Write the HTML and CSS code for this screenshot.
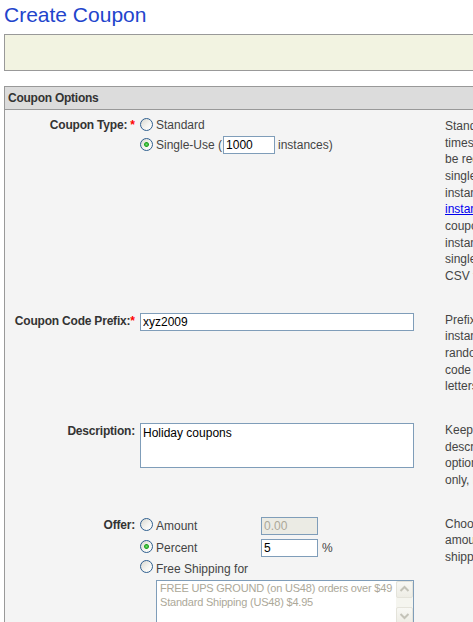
FILE: index.html
```html
<!DOCTYPE html>
<html>
<head>
<meta charset="utf-8">
<title>Create Coupon</title>
<link rel="stylesheet" href="styles.css">
</head>
<body>
<div class="page">
  <h1 class="title">Create Coupon</h1>
  <div class="notice"></div>
  <div class="panel">
    <div class="panel-head">Coupon Options</div>
    <div class="panel-body">

      <div class="row row-first">
        <div class="label">Coupon Type: <span class="req">*</span></div>
        <div class="field">
          <div class="opt">
            <input type="radio" name="ctype" class="radio">
            <span class="opt-text">Standard</span>
          </div>
          <div class="opt opt-gap">
            <input type="radio" name="ctype" class="radio" checked>
            <span class="opt-text">Single-Use (</span>
            <input type="text" class="text qty" value="1000">
            <span class="opt-text after">instances)</span>
          </div>
        </div>
        <div class="desc">
          Standard coupons may be used many<br>
          times by any customer, and can always<br>
          be redeemed again. A<br>
          single-use coupon generates unique<br>
          instances, each usable once. Use<br>
          <a href="#" class="link">instance management</a> to see each<br>
          coupon's status, add more<br>
          instances or download the<br>
          single-use codes as a<br>
          CSV file.
        </div>
      </div>

      <div class="row">
        <div class="label">Coupon Code Prefix:<span class="req">*</span></div>
        <div class="field">
          <input type="text" class="text wide" value="xyz2009">
        </div>
        <div class="desc">
          Prefix used for every generated<br>
          instance. It is followed by a<br>
          random string to make each<br>
          code unique. Use numbers and<br>
          letters only.
        </div>
      </div>

      <div class="row">
        <div class="label">Description:</div>
        <div class="field">
          <textarea class="area">Holiday coupons</textarea>
        </div>
        <div class="desc">
          Keep this short; the<br>
          description is shown in the<br>
          options list for admin use<br>
          only, not to customers.
        </div>
      </div>

      <div class="row">
        <div class="label">Offer:</div>
        <div class="field">
          <div class="offer-line">
            <div class="opt">
              <input type="radio" name="offer" class="radio">
              <span class="opt-text">Amount</span>
            </div>
            <input type="text" class="text amt" value="0.00" disabled>
          </div>
          <div class="offer-line offer-gap">
            <div class="opt">
              <input type="radio" name="offer" class="radio" checked>
              <span class="opt-text">Percent</span>
            </div>
            <input type="text" class="text amt" value="5">
            <span class="opt-text pct">%</span>
          </div>
          <div class="opt ship-line">
            <input type="radio" name="offer" class="radio">
            <span class="opt-text ship-text">Free Shipping for</span>
          </div>
          <div class="listbox">
            <div class="list-items">
              <div class="list-item">FREE UPS GROUND (on US48) orders over $49</div>
              <div class="list-item">Standard Shipping (US48) $4.95</div>
            </div>
            <div class="sbar">
              <div class="sbtn">
                <svg width="17" height="17" viewBox="0 0 17 17"><polyline points="4.5,10 8.5,6 12.5,10" fill="none" stroke="#c4c3b8" stroke-width="2"/></svg>
              </div>
              <div class="strack"></div>
              <div class="sbtn">
                <svg width="17" height="17" viewBox="0 0 17 17"><polyline points="4.5,7 8.5,11 12.5,7" fill="none" stroke="#c4c3b8" stroke-width="2"/></svg>
              </div>
            </div>
          </div>
        </div>
        <div class="desc">
          Choose a percent or dollar<br>
          amount off, or free<br>
          shipping.
        </div>
      </div>

    </div>
  </div>
</div>
</body>
</html>
```

FILE: styles.css
```css
html, body {
  margin: 0;
  padding: 0;
  overflow: hidden;
  background: #ffffff;
}

body {
  padding: 0 4px;
  font-family: "Liberation Sans", Arial, sans-serif;
  font-size: 12px;
  color: #444444;
}

.page {
  width: 780px;
}

.title {
  margin: 3px 0 7px 0;
  font-size: 21px;
  line-height: 24px;
  font-weight: normal;
  color: #2244cc;
}

.notice {
  height: 35px;
  border-top: 1px solid #999999;
  border-bottom: 1px solid #999999;
  border-left: 1px solid #999999;
  background: #f2f3e1;
  margin-bottom: 15px;
}

.panel {
  border-top: 1px solid #999999;
  border-left: 1px solid #999999;
  background: #f4f4f4;
  min-height: 560px;
}

.panel-head {
  height: 22px;
  line-height: 22px;
  padding-left: 3px;
  background: #dcdcdc;
  border-bottom: 1px solid #999999;
  font-weight: bold;
  color: #333333;
  letter-spacing: -0.25px;
}

.panel-body {
  padding-top: 6px;
}

.row {
  display: grid;
  grid-template-columns: 130px 300px 320px;
  column-gap: 5px;
  margin-bottom: 25px;
  align-items: start;
}

.label {
  text-align: right;
  font-weight: bold;
  color: #333333;
  line-height: 16.67px;
  padding-top: 3px;
  white-space: nowrap;
  letter-spacing: -0.2px;
}

.req {
  color: #ff0000;
  letter-spacing: 0;
}

.field {
  padding-top: 3px;
}

.row-first .label {
  padding-top: 1px;
}

.row-first .field {
  padding-top: 0;
}

.desc {
  padding-top: 2px;
  line-height: 16.67px;
  white-space: nowrap;
  color: #444444;
}

.link {
  color: #0000ee;
  text-decoration: underline;
}

.opt {
  display: flex;
  align-items: center;
  height: 18px;
}

.opt-gap {
  margin-top: 2px;
}

.opt-text {
  line-height: 18px;
  white-space: nowrap;
}

.opt-text.after {
  margin-left: 3px;
}

.radio {
  appearance: none;
  -webkit-appearance: none;
  box-sizing: border-box;
  flex: none;
  width: 13px;
  height: 13px;
  margin: 0 3px 2px 0;
  border: 1px solid #2f5f8f;
  border-radius: 50%;
  background: linear-gradient(135deg, #d8d8d0 0%, #f4f4f0 55%, #ffffff 100%);
}

.radio:checked {
  background:
    radial-gradient(circle at 50% 50%, #6fe06f 0, #22a322 2px, rgba(34,163,34,0) 2.9px),
    linear-gradient(135deg, #d8d8d0 0%, #f4f4f0 55%, #ffffff 100%);
}

.text {
  box-sizing: border-box;
  height: 18px;
  margin: 0;
  padding: 0 2px;
  border: 1px solid #7f9db9;
  background: #ffffff;
  font-family: "Liberation Sans", Arial, sans-serif;
  font-size: 12px;
  color: #000000;
  outline: none;
}

.qty {
  width: 52px;
  margin-left: 1px;
}

.wide {
  width: 274px;
}

.area {
  box-sizing: border-box;
  display: block;
  width: 274px;
  height: 45px;
  margin: 0;
  padding: 2px 2px;
  border: 1px solid #7f9db9;
  background: #ffffff;
  font-family: "Liberation Sans", Arial, sans-serif;
  font-size: 12px;
  line-height: 14px;
  color: #000000;
  resize: none;
  overflow: hidden;
  outline: none;
}

.offer-line {
  display: grid;
  grid-template-columns: 121px 57px auto;
  align-items: center;
  height: 18px;
}

.offer-gap {
  margin-top: 4px;
}

.amt {
  width: 57px;
}

.amt:disabled {
  background: #ebebe4;
  color: #aca899;
}

.pct {
  margin-left: 4px;
}

.ship-line {
  margin-top: 2px;
}

.ship-text {
  padding-top: 2px;
}

.listbox {
  box-sizing: border-box;
  display: flex;
  width: 258px;
  height: 45px;
  margin: 3px 0 0 16px;
  border: 1px solid #7f9db9;
  background: #ffffff;
}

.list-items {
  flex: 1;
  padding: 0 3px;
  overflow: hidden;
}

.list-item {
  font-size: 11px;
  line-height: 14px;
  letter-spacing: -0.2px;
  color: #aca899;
  white-space: nowrap;
}

.sbar {
  display: flex;
  flex-direction: column;
  width: 17px;
  background: #f5f5ef;
}

.sbtn {
  box-sizing: border-box;
  width: 17px;
  height: 17px;
  border: 1px solid #e4e3da;
  border-radius: 2px;
  background: linear-gradient(180deg, #f8f8f4 0%, #eeede5 100%);
}

.sbtn svg {
  display: block;
  margin: -1px;
}

.strack {
  flex: 1;
}
```
